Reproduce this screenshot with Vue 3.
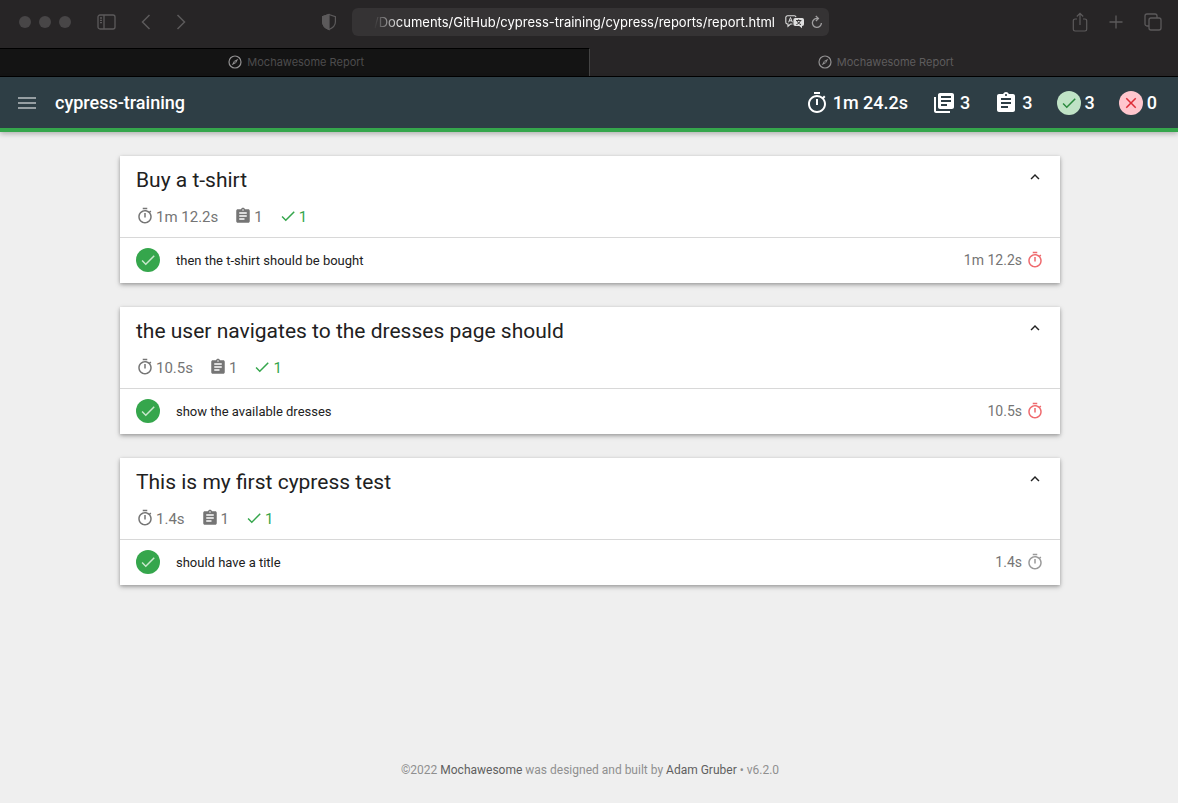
<script setup>
import { ref } from 'vue'

const timerPath =
  'M15 1H9v2h6V1zm-4 13h2V8h-2v6zm8.03-6.61l1.42-1.42c-.43-.51-.9-.99-1.41-1.41l-1.42 1.42C16.07 4.74 14.12 4 12 4c-4.97 0-9 4.03-9 9s4.02 9 9 9 9-4.03 9-9c0-2.12-.74-4.07-1.97-5.61zM12 20c-3.87 0-7-3.13-7-7s3.13-7 7-7 7 3.13 7 7-3.13 7-7 7z'
const libraryPath =
  'M4 6H2v14c0 1.1.9 2 2 2h14v-2H4V6zm16-4H8c-1.1 0-2 .9-2 2v12c0 1.1.9 2 2 2h12c1.1 0 2-.9 2-2V4c0-1.1-.9-2-2-2zm-1 9H9V9h10v2zm-4 4H9v-2h6v2zm4-8H9V5h10v2z'
const assignmentPath =
  'M19 3h-4.18C14.4 1.84 13.3 1 12 1c-1.3 0-2.4.84-2.82 2H5c-1.1 0-2 .9-2 2v14c0 1.1.9 2 2 2h14c1.1 0 2-.9 2-2V5c0-1.1-.9-2-2-2zm-7 0c.55 0 1 .45 1 1s-.45 1-1 1-1-.45-1-1 .45-1 1-1zm2 14H7v-2h7v2zm3-4H7v-2h10v2zm0-4H7V7h10v2z'
const checkPath = 'M9 16.17L4.83 12l-1.42 1.41L9 19 21 7l-1.41-1.41z'
const closePath =
  'M19 6.41L17.59 5 12 10.59 6.41 5 5 6.41 10.59 12 5 17.59 6.41 19 12 13.41 17.59 19 19 17.59 13.41 12z'

const url = ref('l/Documents/GitHub/cypress-training/cypress/reports/report.html')
const tabs = [
  { id: 1, title: 'Mochawesome Report', active: false },
  { id: 2, title: 'Mochawesome Report', active: true }
]
const suites = [
  { title: 'Buy a t-shirt', time: '1m 12.2s', test: 'then the t-shirt should be bought', slow: true },
  { title: 'the user navigates to the dresses page should', time: '10.5s', test: 'show the available dresses', slow: true },
  { title: 'This is my first cypress test', time: '1.4s', test: 'should have a title', slow: false }
]
</script>

<template>
  <div class="window">
    <div class="toolbar">
      <div class="tools left">
        <span class="lights"><i></i><i></i><i></i></span>
        <button class="tool sidebar" aria-label="Show sidebar">
          <svg width="20" height="16" viewBox="0 0 20 16" fill="none" stroke="currentColor" stroke-width="1.3">
            <rect x="1" y="1" width="17" height="14" rx="2" />
            <path d="M7 1v14M3 4h2M3 6.300h2M3 8.600h2" />
          </svg>
        </button>
        <button class="tool back" aria-label="Back">
          <svg width="10" height="16" viewBox="0 0 10 16" fill="none" stroke="currentColor" stroke-width="1.500"><path d="M8.500 1L1.500 8l7 7" /></svg>
        </button>
        <button class="tool" aria-label="Forward">
          <svg width="10" height="16" viewBox="0 0 10 16" fill="none" stroke="currentColor" stroke-width="1.500"><path d="M1.500 1l7 7-7 7" /></svg>
        </button>
        <button class="tool shield" aria-label="Privacy report">
          <svg width="16" height="18" viewBox="0 0 16 18" stroke="currentColor" stroke-width="1.200">
            <path d="M8 1.500L14.400 3.600V9c0 3.500-3 6-6.400 7.500C4.600 15 1.600 12.500 1.600 9V3.600z" fill="none" />
            <path d="M8 1.500V16.500C4.600 15 1.600 12.500 1.600 9V3.600z" fill="currentColor" />
          </svg>
        </button>
      </div>
      <div class="address">
        <input v-model="url" class="url" type="text" aria-label="Address" />
        <button class="tool translate" aria-label="Translate">
          <svg width="20" height="14" viewBox="0 0 20 14">
            <path d="M7.500 9H5.500L3 11.300V9H2.500A1.700 1.700 0 0 1 .8 7.300V2.500A1.700 1.700 0 0 1 2.500.8h6.800A1.700 1.700 0 0 1 11 2.200" fill="none" stroke="currentColor" stroke-width="1.100" />
            <path d="M3.600 7.300L5.500 2.500l1.900 4.800M4.200 5.800h2.600" fill="none" stroke="currentColor" />
            <path d="M10.200 3h7A1.800 1.800 0 0 1 19 4.800v4.400A1.800 1.800 0 0 1 17.200 11H17v2.300L14.300 11h-4.100A1.800 1.800 0 0 1 8.400 9.200V4.800A1.800 1.800 0 0 1 10.200 3z" fill="currentColor" />
            <path d="M11 5.500h5.400M13.700 4.300v1.200M15.400 5.600c-.5 1.800-2 3.200-4 4M12 5.600c.5 1.800 2 3.200 4 4" fill="none" stroke="#353334" />
          </svg>
        </button>
        <button class="tool reload" aria-label="Reload">
          <svg width="12" height="14" viewBox="0 0 12 14" fill="none" stroke="currentColor" stroke-width="1.300">
            <path d="M6.800 3.500A4.500 4.500 0 1 0 10.400 8M4.800 1l2.600 2.500L4.900 6" />
          </svg>
        </button>
      </div>
      <div class="tools right">
        <button class="tool" aria-label="Share">
          <svg width="16" height="20" viewBox="0 0 16 20" fill="none" stroke="currentColor" stroke-width="1.200">
            <path d="M5 7H3a1.700 1.700 0 0 0-1.700 1.700v8.600A1.700 1.700 0 0 0 3 19h10a1.700 1.700 0 0 0 1.700-1.700V8.700A1.700 1.700 0 0 0 13 7h-2M8 13V1.500M4.800 4.500L8 1.400l3.200 3.100" />
          </svg>
        </button>
        <button class="tool" aria-label="New tab">
          <svg width="14" height="14" viewBox="0 0 14 14" fill="none" stroke="currentColor" stroke-width="1.300"><path d="M7 .5v13M.5 7h13" /></svg>
        </button>
        <button class="tool" aria-label="Tab overview">
          <svg width="18" height="18" viewBox="0 0 18 18" fill="none" stroke="currentColor" stroke-width="1.300">
            <rect x="5" y="5" width="12" height="12" rx="2" />
            <path d="M5 13H3a2 2 0 0 1-2-2V3a2 2 0 0 1 2-2h8a2 2 0 0 1 2 2v2" />
          </svg>
        </button>
      </div>
    </div>

    <div class="tabs">
      <button v-for="tab in tabs" :key="tab.id" class="tab" :class="{ active: tab.active }">
        <svg width="14" height="14" viewBox="0 0 14 14">
          <circle cx="7" cy="7" r="6" fill="none" stroke="currentColor" stroke-width="1.200" />
          <path d="M10.300 3.700L8 8 3.700 10.300 6 6z" fill="currentColor" />
          <circle cx="7" cy="7" r=".8" fill="#222" />
        </svg>
        <span>{{ tab.title }}</span>
      </button>
    </div>

    <header class="navbar">
      <button class="menu" aria-label="Menu">
        <svg width="18" height="12" viewBox="0 0 18 12"><path d="M0 0h18v2H0zM0 5h18v2H0zM0 10h18v2H0z" fill="currentColor" /></svg>
      </button>
      <h1>cypress-training</h1>
      <ul class="summary">
        <li><svg viewBox="0 0 24 24"><path :d="timerPath" /></svg>1m 24.2s</li>
        <li><svg viewBox="0 0 24 24"><path :d="libraryPath" /></svg>3</li>
        <li><svg viewBox="0 0 24 24"><path :d="assignmentPath" /></svg>3</li>
        <li><span class="circle pass"><svg viewBox="0 0 24 24"><path :d="checkPath" /></svg></span>3</li>
        <li><span class="circle fail"><svg viewBox="0 0 24 24"><path :d="closePath" /></svg></span>0</li>
      </ul>
    </header>

    <main>
      <section v-for="suite in suites" :key="suite.title" class="card">
        <div class="card-head">
          <div class="title-row">
            <h2>{{ suite.title }}</h2>
            <button class="collapse" aria-label="Collapse suite">
              <svg viewBox="0 0 24 24"><path d="M12 8l-6 6 1.410 1.410L12 10.830l4.590 4.580L18 14z" /></svg>
            </button>
          </div>
          <ul class="stats">
            <li><svg viewBox="0 0 24 24"><path :d="timerPath" /></svg>{{ suite.time }}</li>
            <li><svg viewBox="0 0 24 24"><path :d="assignmentPath" /></svg>1</li>
            <li class="passed"><svg viewBox="0 0 24 24"><path :d="checkPath" /></svg>1</li>
          </ul>
        </div>
        <div class="test">
          <span class="circle solid"><svg viewBox="0 0 24 24"><path :d="checkPath" /></svg></span>
          <h3>{{ suite.test }}</h3>
          <span class="duration" :class="{ slow: suite.slow }">
            {{ suite.time }}<svg viewBox="0 0 24 24"><path :d="timerPath" /></svg>
          </span>
        </div>
      </section>
    </main>

    <footer>
      ©2022 <a href="#">Mochawesome</a> was designed and built by <a href="#">Adam Gruber</a> • v6.2.0
    </footer>
  </div>
</template>

<style>
body {
  background: #efefef;
}
</style>

<style scoped>
.window {
  min-height: 100vh;
  display: flex;
  flex-direction: column;
  font-family: Roboto, "Liberation Sans", sans-serif;
}
button {
  padding: 0;
  border: 0;
  background: none;
  color: inherit;
  font: inherit;
}
svg {
  display: block;
  flex: none;
}
ul {
  display: flex;
  margin: 0;
  padding: 0;
  list-style: none;
}
h1, h2, h3 {
  margin: 0;
}
.toolbar {
  display: flex;
  align-items: center;
  height: 48px;
  padding-bottom: 4px;
  box-sizing: border-box;
  background: #272526;
  color: #5c5a5b;
}
.tools {
  flex: 1;
  display: flex;
  align-items: center;
}
.left {
  padding-left: 19px;
}
.tool {
  display: flex;
}
.lights {
  display: flex;
  gap: 8px;
  margin-right: 26px;
}
.lights i {
  width: 12px;
  height: 12px;
  border-radius: 50%;
  background: #484647;
}
.back {
  margin: 0 25px 0 24px;
}
.shield {
  margin: 0 15px 0 auto;
}
.right {
  justify-content: flex-end;
  gap: 21px;
  padding-right: 16px;
}
.address {
  display: flex;
  align-items: center;
  box-sizing: border-box;
  width: 477px;
  height: 28px;
  padding: 0 6px 0 12px;
  border-radius: 6px;
  background: #353334;
}
.url {
  flex: 1;
  min-width: 0;
  padding: 0;
  border: 0;
  outline: 0;
  background: none;
  color: #fff;
  font: 400 13px Inter, "Liberation Sans", sans-serif;
  text-align: right;
  -webkit-mask-image: linear-gradient(to right, transparent 10px, #000 38px);
  mask-image: linear-gradient(to right, transparent 10px, #000 38px);
}
.translate {
  margin: 0 6px 0 10px;
  color: #dedede;
}
.reload {
  color: #a09fa0;
}
.tabs {
  display: flex;
  height: 29px;
  box-sizing: border-box;
  border-bottom: 1px solid #000;
  background: #272526;
}
.tab {
  flex: 1;
  display: flex;
  align-items: center;
  justify-content: center;
  gap: 5px;
  padding: 0 0 2px 4px;
  background: #141414;
  border-top: 1px solid #000;
  border-right: 1px solid #444;
  color: #929192;
  font: 400 11px Inter, "Liberation Sans", sans-serif;
}
.tab span {
  color: #4d4c4d;
}
.tab.active {
  background: #272526;
  border-top-color: #272526;
  border-right: 0;
}
.tab.active span {
  color: #5e5c5d;
}
.navbar {
  display: flex;
  align-items: center;
  height: 51px;
  padding: 0 21px 0 18px;
  border-bottom: 4px solid #35a64c;
  background: #2e3e45;
  color: #fff;
  box-shadow: 0 2px 5px rgba(0, 0, 0, 0.26);
}
.menu {
  margin-right: 19px;
  color: #969ea2;
}
h1 {
  font-size: 18px;
  font-weight: 500;
}
.summary {
  margin-left: auto;
  gap: 24px;
  font-size: 18px;
  font-weight: 500;
}
.summary li {
  display: flex;
  align-items: center;
  gap: 4px;
}
.summary svg {
  width: 24px;
  height: 24px;
  fill: #fff;
}
.circle {
  display: flex;
  align-items: center;
  justify-content: center;
  width: 24px;
  height: 24px;
  border-radius: 50%;
}
.circle svg,
.summary .circle svg {
  width: 18px;
  height: 18px;
}
.pass {
  background: #c0e3c6;
}
.summary .pass svg {
  fill: #2b8a3e;
}
.fail {
  background: #ffc6cd;
}
.summary .fail svg {
  fill: #dd2c36;
}
.solid {
  background: #35a64c;
}
.solid svg {
  fill: #c8e8cd;
}
main {
  display: flex;
  flex-direction: column;
  gap: 24px;
  padding: 24px 118px 24px 120px;
}
.card {
  background: #fff;
  box-shadow: 0 2px 5px rgba(0, 0, 0, 0.26), 0 1px 3px rgba(0, 0, 0, 0.16);
}
.card-head {
  padding: 10px 16px 9px;
  border-bottom: 1px solid #d8d8d8;
}
.title-row {
  display: flex;
  justify-content: space-between;
  align-items: flex-start;
}
h2 {
  color: #212121;
  font-size: 21px;
  font-weight: 400;
  line-height: 28px;
}
.collapse svg {
  width: 18px;
  height: 18px;
  margin-top: 2px;
  fill: #212121;
}
.stats {
  gap: 16px;
  margin-top: 12px;
  color: #757575;
  font-size: 15px;
  line-height: 22px;
}
.stats li {
  display: flex;
  align-items: center;
  gap: 2px;
}
.stats svg,
.duration svg {
  width: 18px;
  height: 18px;
  fill: currentColor;
}
.stats svg {
  margin-bottom: 2px;
}
.stats .passed {
  color: #35a64c;
}
.test {
  display: flex;
  align-items: center;
  padding: 10px 16px 11px;
}
h3 {
  margin-left: 16px;
  color: #212121;
  font-size: 13px;
  font-weight: 400;
}
.duration {
  display: flex;
  align-items: center;
  gap: 4px;
  margin-left: auto;
  color: #757575;
  font-size: 14px;
}
.duration svg {
  fill: #9a9a9a;
}
.duration.slow svg {
  fill: #ef6a6e;
}
footer {
  margin-top: auto;
  padding: 0 0 24px 2px;
  color: #8f8f8f;
  font-size: 12px;
  line-height: 18px;
  text-align: center;
}
footer a {
  color: #5f5f5f;
  text-decoration: none;
}
</style>
